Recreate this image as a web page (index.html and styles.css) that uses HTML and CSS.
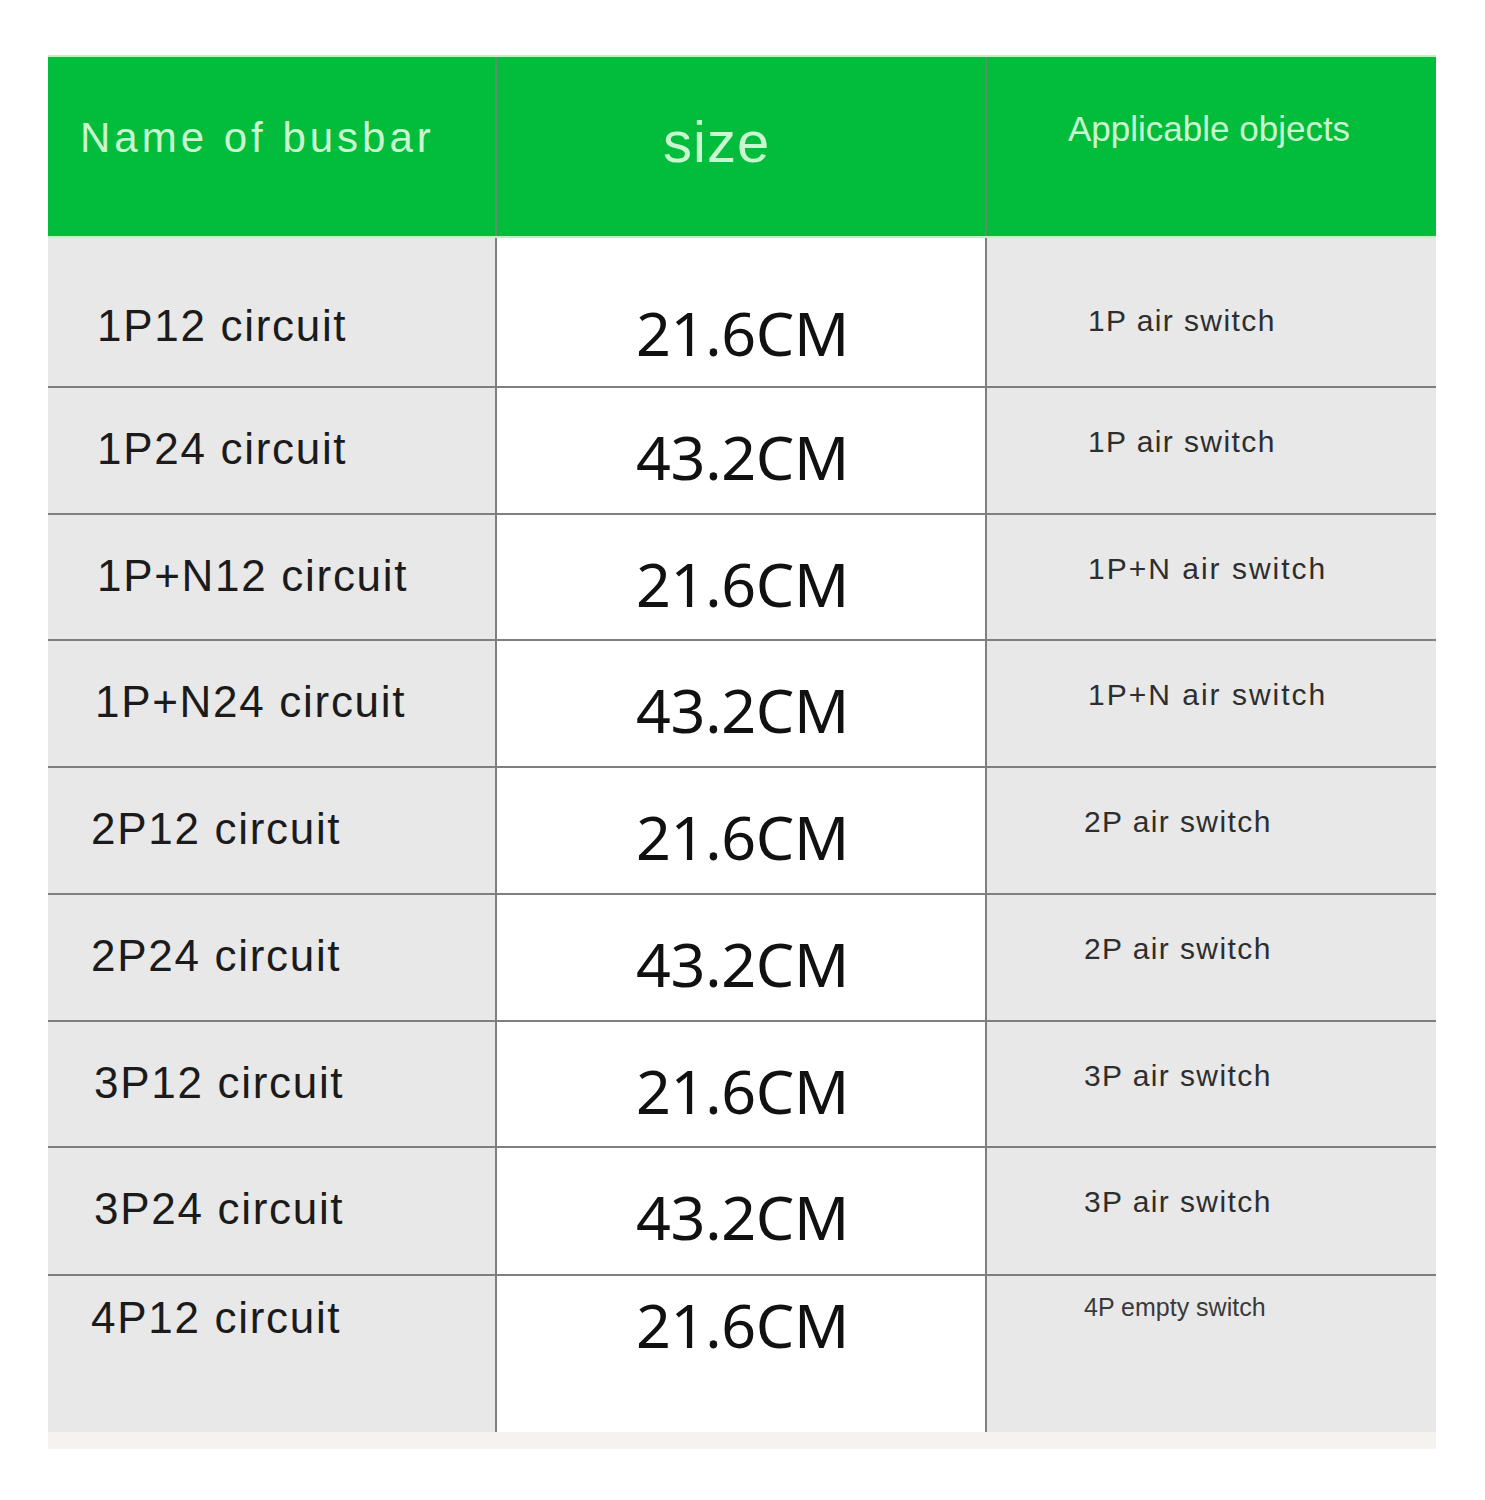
FILE: index.html
```html
<!DOCTYPE html>
<html lang="en">
<head>
<meta charset="utf-8">
<title>Busbar sizes</title>
<link rel="stylesheet" href="styles.css">
</head>
<body>
<div class="page">
  <div class="table">
    <div class="row head">
      <div class="cell c1"><span class="h-name">Name of busbar</span></div>
      <div class="cell c2"><span class="h-size">size</span></div>
      <div class="cell c3"><span class="h-app">Applicable objects</span></div>
    </div>

    <div class="row body r-first">
      <div class="cell c1 name">1P12 circuit</div>
      <div class="cell c2 size">21.6CM</div>
      <div class="cell c3 app">1P air switch</div>
    </div>
    <div class="row body h127">
      <div class="cell c1 name">1P24 circuit</div>
      <div class="cell c2 size">43.2CM</div>
      <div class="cell c3 app">1P air switch</div>
    </div>
    <div class="row body h126">
      <div class="cell c1 name">1P+N12 circuit</div>
      <div class="cell c2 size">21.6CM</div>
      <div class="cell c3 app wide">1P+N air switch</div>
    </div>
    <div class="row body h127">
      <div class="cell c1 name shift2">1P+N24 circuit</div>
      <div class="cell c2 size">43.2CM</div>
      <div class="cell c3 app wide">1P+N air switch</div>
    </div>
    <div class="row body h127">
      <div class="cell c1 name shift6">2P12 circuit</div>
      <div class="cell c2 size">21.6CM</div>
      <div class="cell c3 app shift4">2P air switch</div>
    </div>
    <div class="row body h127">
      <div class="cell c1 name shift6">2P24 circuit</div>
      <div class="cell c2 size">43.2CM</div>
      <div class="cell c3 app shift4">2P air switch</div>
    </div>
    <div class="row body h126">
      <div class="cell c1 name shift3">3P12 circuit</div>
      <div class="cell c2 size">21.6CM</div>
      <div class="cell c3 app shift4">3P air switch</div>
    </div>
    <div class="row body h128">
      <div class="cell c1 name shift3">3P24 circuit</div>
      <div class="cell c2 size">43.2CM</div>
      <div class="cell c3 app shift4">3P air switch</div>
    </div>
    <div class="row body r-last">
      <div class="cell c1 name shift6">4P12 circuit</div>
      <div class="cell c2 size">21.6CM</div>
      <div class="cell c3 app small shift4">4P empty switch</div>
    </div>
  </div>
  <div class="foot-strip"></div>
</div>
</body>
</html>
```

FILE: styles.css
```css
html, body {
  margin: 0;
  padding: 0;
  background: #ffffff;
}

.page {
  padding: 55px 0 0 48px;
  width: 1388px;
}

.table {
  display: flex;
  flex-direction: column;
  width: 1388px;
}

.row {
  display: grid;
  grid-template-columns: 449px 490px 449px;
  box-sizing: border-box;
}

.cell {
  box-sizing: border-box;
}

.c1 {
  border-right: 2px solid #7f7f7f;
}
.c2 {
  border-right: 2px solid #7f7f7f;
}

/* ---------- header ---------- */
.head {
  height: 183px;
  background: #01bd3b;
  border-top: 2px solid #b9f3c6;
  border-bottom: 2px solid #b9f3c6;
}
.head .c1,
.head .c2 {
  border-right-color: #5f8f6a;
}
.head .cell {
  font-family: "Liberation Sans", Arial, sans-serif;
  color: #c9f7cf;
  line-height: 1;
}
.h-name {
  display: block;
  font-size: 42px;
  letter-spacing: 4px;
  padding: 60px 0 0 32px;
}
.h-size {
  display: block;
  font-size: 58px;
  letter-spacing: 1px;
  padding: 56px 0 0 166px;
}
.h-app {
  display: block;
  font-size: 35px;
  padding: 54px 0 0 81px;
}

/* ---------- body rows ---------- */
.body {
  border-bottom: 2px solid #7f7f7f;
}
.body .c1,
.body .c3 {
  background: #e8e8e8;
}
.body .c2 {
  background: #ffffff;
}

.h126 { height: 126px; }
.h127 { height: 127px; }
.h128 { height: 128px; }
.r-first { height: 150px; }
.r-last {
  height: 156px;
  border-bottom: none;
}

.name {
  font-family: "Liberation Sans", Arial, sans-serif;
  font-size: 44px;
  letter-spacing: 1.7px;
  line-height: 1;
  color: #1b1b1b;
  padding-left: 49px;
  padding-top: 39px;
}
.size {
  font-family: "Noto Sans", "Open Sans", sans-serif;
  font-size: 61px;
  line-height: 1;
  color: #111111;
  padding-left: 139px;
  padding-top: 38px;
  letter-spacing: -0.3px;
}
.app {
  font-family: "Liberation Sans", Arial, sans-serif;
  font-size: 30px;
  letter-spacing: 1.4px;
  line-height: 1;
  color: #2e2e2e;
  padding-left: 101px;
  padding-top: 39px;
}
.app.wide {
  letter-spacing: 2px;
}
.app.small {
  font-size: 25px;
  letter-spacing: 0;
  color: #3a3a3a;
}

.r-first .name { padding-top: 66px; }
.r-first .size { padding-top: 64px; }
.r-first .app { padding-top: 68px; }

.r-last .name { padding-top: 20px; }
.r-last .size { padding-top: 18px; }
.r-last .app { padding-top: 19px; }

.name.shift2 { padding-left: 47px; }
.name.shift3 { padding-left: 46px; }
.name.shift6 { padding-left: 43px; }
.app.shift4 { padding-left: 97px; }

.foot-strip {
  width: 1388px;
  height: 17px;
  background: #f4f3ef;
}
```
